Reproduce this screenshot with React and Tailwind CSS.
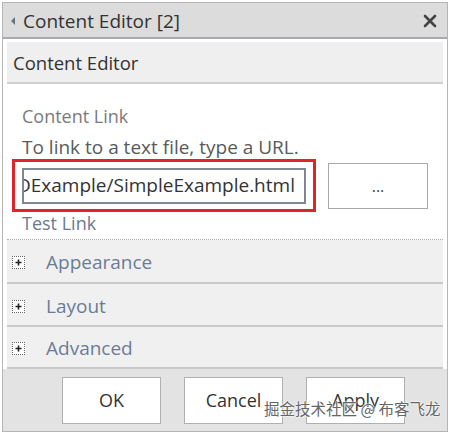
export default function App() {
  const font = { fontFamily: '"Open Sans", "Noto Sans", sans-serif' };
  return (
    <div className="w-[450px] h-[434px] bg-white p-[2px]" style={font}>
      <div className="w-full h-[430px] border border-[#b5b5b5] flex flex-col">
        {/* Title bar */}
        <div className="h-[36px] shrink-0 bg-[#dcdcdc] border-b-2 border-[#a9a9b0] flex items-center pl-[6px] pr-[10px] pt-[2px]">
          <svg width="8" height="10" viewBox="0 0 8 10" className="mr-[6px]">
            <path d="M6 1 L2 5 L6 9 Z" fill="#6b7280" />
          </svg>
          <span className="text-[19px] text-[#333] leading-none">Content Editor [2]</span>
          <div className="flex-1" />
          <svg width="14" height="14" viewBox="0 0 14 14">
            <path d="M2 2 L12 12 M12 2 L2 12" stroke="#444" strokeWidth="2.6" strokeLinecap="round" />
          </svg>
        </div>
        {/* Body */}
        <div className="flex-1 flex flex-col px-[4px] pt-[3px]">
          <div className="h-[42px] shrink-0 bg-[#efefef] border-b-2 border-[#d0d0d0] flex items-center pl-[6px] pt-[1px]">
            <span className="text-[18.5px] text-[#333]">Content Editor</span>
          </div>
          <div className="pl-[15px] pt-[20px] pb-[5px] border-b border-dotted border-[#aaa]">
            <div className="text-[18px] text-[#7b7b7b] leading-[24px]">Content Link</div>
            <div className="text-[19px] text-[#5a5a5a] leading-[24px] mt-[7px]">To link to a text file, type a URL.</div>
            <div className="flex items-center -ml-[10px]">
              <div className="w-[304px] h-[53px] border-[3px] border-[#e0242c] flex items-center px-[7px]">
                <div className="w-full h-[36px] border-2 border-[#7c8799] flex items-center overflow-hidden">
                  <span className="text-[19px] text-[#333] whitespace-nowrap -ml-[7px]">DExample/SimpleExample.html</span>
                </div>
              </div>
              <div className="ml-[12px] w-[100px] h-[46px] border border-[#a8a8a8] flex items-center justify-center text-[#444] text-[16px]">...</div>
            </div>
            <div className="text-[18px] text-[#6b7a90] leading-[22px]">Test Link</div>
          </div>
          {[
            ["Appearance", "h-[44px]"],
            ["Layout", "h-[43px]"],
            ["Advanced", "h-[42px]"],
          ].map(([label, h]) => (
            <div key={label} className={`${h} shrink-0 bg-[#f0f0f0] border-b-2 border-[#c9c9c9] flex items-center pl-[5px] pt-[3px]`}>
              <div className="w-[13px] h-[13px] border border-dotted border-[#666] bg-white flex items-center justify-center">
                <svg width="9" height="9" viewBox="0 0 9 9">
                  <path d="M4.5 1.5 V7.5 M1.5 4.5 H7.5" stroke="#222" strokeWidth="1.6" />
                </svg>
              </div>
              <span className="ml-[21px] text-[19px] text-[#6c7c96]">{label}</span>
            </div>
          ))}
          <div className="flex-1 bg-[#e3e3e3] -mx-[4px] flex items-start pt-[8px] pl-[59px] gap-[23px] relative">
            {["OK", "Cancel", "Apply"].map((b) => (
              <div key={b} className="w-[99px] h-[47px] bg-white border border-[#b0b0b0] flex items-center justify-center text-[18px] text-[#333]">{b}</div>
            ))}
            <div className="absolute left-[261px] top-[28px] text-[15.5px] text-[#666] whitespace-nowrap" style={{ fontFamily: '"Noto Sans CJK SC", sans-serif', textShadow: "0 0 2px #fff, 0 0 2px #fff, 0 0 1px #fff" }}>掘金技术社区 @ 布客飞龙</div>
          </div>
        </div>
      </div>
    </div>
  );
}
